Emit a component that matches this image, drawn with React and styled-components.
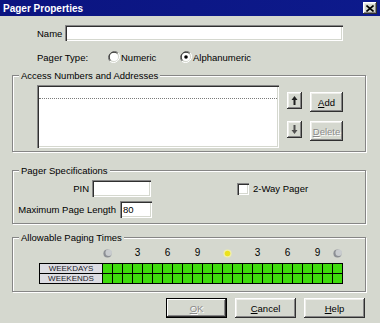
import React from "react";
import styled, { createGlobalStyle } from "styled-components";

const FACE = "#d5d8cf";

const GlobalStyle = createGlobalStyle`
  html, body {
    margin: 0;
    padding: 0;
    background: ${FACE};
  }
  body {
    font-family: "Liberation Sans", Arial, sans-serif;
    font-size: 9.5px;
    color: #000;
  }
`;

const HOURS = Array.from({ length: 24 }, (_, i) => i);

const MARKS = [
  { col: 1, kind: "moon" },
  { col: 4, text: "3" },
  { col: 7, text: "6" },
  { col: 10, text: "9" },
  { col: 13, kind: "sun" },
  { col: 16, text: "3" },
  { col: 19, text: "6" },
  { col: 22, text: "9" },
  { col: 24, kind: "moon" },
];

function Radio({ checked }) {
  return (
    <svg width="12" height="12" viewBox="0 0 12 12">
      <path d="M10.2 1.8 A6 6 0 0 0 1.8 10.2" stroke="#808080" strokeWidth="1" fill="none" />
      <path d="M9.4 2.6 A4.8 4.8 0 0 0 2.6 9.4" stroke="#303030" strokeWidth="1" fill="none" />
      <path d="M1.8 10.2 A6 6 0 0 0 10.2 1.8" stroke="#fff" strokeWidth="1" fill="none" />
      <circle cx="6" cy="6" r="4" fill="#fff" />
      {checked && <circle cx="6" cy="6" r="1.8" fill="#000" />}
    </svg>
  );
}

function Moon() {
  return (
    <svg width="11" height="11" viewBox="0 0 11 11">
      <circle cx="5.5" cy="5.5" r="5" fill="#8c8f94" />
      <circle cx="7" cy="4.5" r="4" fill="#c9cccf" />
    </svg>
  );
}

function Sun() {
  return (
    <svg width="11" height="11" viewBox="0 0 11 11">
      <circle cx="5.5" cy="5.5" r="5" fill="#f1f0a8" />
      <circle cx="5.5" cy="5.5" r="3.4" fill="#ece21c" />
    </svg>
  );
}

function Arrow({ down }) {
  return (
    <svg width="7" height="11" viewBox="0 0 7 11" style={{ transform: down ? "rotate(180deg)" : "none" }}>
      <path d="M3.5 1 L0.5 5 H2.5 V10 H4.5 V5 H6.5 Z" fill={down ? "#505050" : "#202020"} />
    </svg>
  );
}

export default function App() {
  return (
    <>
      <GlobalStyle />
      <Window>
        <TitleBar>
          <Title>Pager Properties</Title>
          <CloseButton>
            <svg width="8" height="7" viewBox="0 0 8 7">
              <path d="M0.5 0.5 L7.5 6.5 M7.5 0.5 L0.5 6.5" stroke="#000" strokeWidth="1.6" />
            </svg>
          </CloseButton>
        </TitleBar>

        <FieldRow $top={9}>
          <RowLabel $w={28}>Name</RowLabel>
          <TextField $w={278} $h={16} />
        </FieldRow>

        <FieldRow $top={8}>
          <RowLabel $w={71}>Pager Type:</RowLabel>
          <Option $w={72}>
            <Radio />
            <span>Numeric</span>
          </Option>
          <Option>
            <Radio checked />
            <span>Alphanumeric</span>
          </Option>
        </FieldRow>

        <GroupBox $top={10}>
          <Legend>Access Numbers and Addresses</Legend>
          <AccessBody>
            <ListBox>
              <ListRow />
            </ListBox>
            <ListButtons>
              <ButtonLine>
                <ArrowButton>
                  <Arrow />
                </ArrowButton>
                <PushButton $w={33} $h={20}>
                  <u>A</u>dd
                </PushButton>
              </ButtonLine>
              <ButtonLine>
                <ArrowButton>
                  <Arrow down />
                </ArrowButton>
                <PushButton $w={33} $h={20} $disabled>
                  <u>D</u>elete
                </PushButton>
              </ButtonLine>
            </ListButtons>
          </AccessBody>
        </GroupBox>

        <GroupBox $top={18}>
          <Legend>Pager Specifications</Legend>
          <SpecBody>
            <SpecRow>
              <SpecLabel $w={76}>PIN</SpecLabel>
              <TextField $w={59} $h={17} $gap={3} />
              <CheckItem>
                <CheckBox />
                <span>2-Way Pager</span>
              </CheckItem>
            </SpecRow>
            <SpecRow>
              <SpecLabel $w={103}>Maximum Page Length</SpecLabel>
              <TextField $w={32} $h={17} $gap={4}>
                80
              </TextField>
            </SpecRow>
          </SpecBody>
        </GroupBox>

        <GroupBox $top={13}>
          <Legend>Allowable Paging Times</Legend>
          <TimesBody>
            <MarkRow>
              {MARKS.map((m, i) => (
                <Mark key={i} $col={m.col + 1}>
                  {m.kind === "moon" ? <Moon /> : m.kind === "sun" ? <Sun /> : m.text}
                </Mark>
              ))}
            </MarkRow>
            <TimeGrid>
              <DayLabel>WEEKDAYS</DayLabel>
              {HOURS.map((h) => (
                <Slot key={"d" + h} />
              ))}
              <DayLabel>WEEKENDS</DayLabel>
              {HOURS.map((h) => (
                <Slot key={"e" + h} />
              ))}
            </TimeGrid>
          </TimesBody>
        </GroupBox>

        <DialogButtons>
          <PushButton $w={61} $h={20} $disabled $default>
            <u>O</u>K
          </PushButton>
          <PushButton $w={61} $h={20}>
            <u>C</u>ancel
          </PushButton>
          <PushButton $w={61} $h={20}>
            <u>H</u>elp
          </PushButton>
        </DialogButtons>
      </Window>
    </>
  );
}

// ----------------- Styles section ---------------------

const raised = `
  background: ${FACE};
  box-shadow: inset -1px -1px #303030, inset 1px 1px #ffffff,
    inset -2px -2px #868686, inset 2px 2px #eeeeea;
`;

const sunken = `
  background: #ffffff;
  box-shadow: inset 1px 1px #868686, inset 2px 2px #303030,
    inset -1px -1px #ffffff, inset -2px -2px ${FACE};
`;

const Window = styled.div`
  width: 380px;
  height: 323px;
  display: flex;
  flex-direction: column;
  background: ${FACE};
  overflow: hidden;
`;

const TitleBar = styled.div`
  height: 16px;
  flex: none;
  display: flex;
  align-items: center;
  justify-content: space-between;
  padding: 0 3px 0 3px;
  background: linear-gradient(90deg, #0b1480 0%, #0d1a8c 100%);
`;

const Title = styled.span`
  color: #fff;
  font-weight: bold;
  font-size: 10px;
`;

const CloseButton = styled.div`
  ${raised};
  width: 14px;
  height: 12px;
  display: flex;
  align-items: center;
  justify-content: center;
`;

const FieldRow = styled.div`
  display: flex;
  align-items: center;
  height: 16px;
  margin: ${(p) => p.$top}px 0 0 37px;
`;

const RowLabel = styled.span`
  width: ${(p) => p.$w}px;
  flex: none;
`;

const Option = styled.label`
  display: flex;
  align-items: center;
  width: ${(p) => (p.$w ? `${p.$w}px` : "auto")};

  & > span {
    margin-left: 1px;
  }
`;

const TextField = styled.div`
  ${sunken};
  width: ${(p) => p.$w}px;
  height: ${(p) => p.$h}px;
  margin-left: ${(p) => p.$gap || 0}px;
  flex: none;
  box-sizing: border-box;
  padding: 2px 0 0 3px;
  line-height: 13px;
`;

const GroupBox = styled.div`
  margin: ${(p) => p.$top}px 0 0 12px;
  width: 354px;
  box-sizing: border-box;
  border: 1px solid #868686;
  box-shadow: inset 1px 1px #ffffff, 1px 1px #ffffff;
  display: flex;
  flex-direction: column;
`;

const Legend = styled.span`
  align-self: flex-start;
  margin: -7px 0 0 6px;
  padding: 0 2px;
  height: 13px;
  line-height: 13px;
  background: ${FACE};
`;

const AccessBody = styled.div`
  display: flex;
  padding: 3px 0 3px 24px;
`;

const ListBox = styled.div`
  ${sunken};
  width: 242px;
  height: 63px;
  box-sizing: border-box;
  padding: 2px;
`;

const ListRow = styled.div`
  height: 11px;
  border-bottom: 1px dotted #7a7a7a;
`;

const ListButtons = styled.div`
  display: flex;
  flex-direction: column;
  gap: 9px;
  margin: 7px 0 0 8px;
`;

const ButtonLine = styled.div`
  display: flex;
  align-items: flex-start;
  gap: 8px;
`;

const ArrowButton = styled.div`
  ${raised};
  width: 15px;
  height: 17px;
  display: flex;
  align-items: center;
  justify-content: center;
`;

const PushButton = styled.div`
  ${raised};
  width: ${(p) => p.$w}px;
  height: ${(p) => p.$h}px;
  box-sizing: border-box;
  display: flex;
  align-items: center;
  justify-content: center;
  color: ${(p) => (p.$disabled ? "#8a8a8a" : "#000")};
  text-shadow: ${(p) => (p.$disabled ? "1px 1px #fff" : "none")};
  ${(p) =>
    p.$default &&
    `box-shadow: inset 0 0 0 1px #000, inset -2px -2px #303030, inset 2px 2px #ffffff,
      inset -3px -3px #868686;`}

  u {
    text-decoration-thickness: 1px;
  }
`;

const SpecBody = styled.div`
  display: flex;
  flex-direction: column;
  gap: 4px;
  padding: 3px 0 5px 0;
`;

const SpecRow = styled.div`
  display: flex;
  align-items: center;
`;

const SpecLabel = styled.span`
  width: ${(p) => p.$w}px;
  flex: none;
  text-align: right;
`;

const CheckItem = styled.label`
  display: flex;
  align-items: center;
  gap: 4px;
  margin-left: 86px;
`;

const CheckBox = styled.span`
  ${sunken};
  width: 12px;
  height: 12px;
  display: block;
`;

const TimesBody = styled.div`
  display: flex;
  flex-direction: column;
  padding: 3px 0 7px 26px;
`;

const gridColumns = `
  display: grid;
  grid-template-columns: 62px repeat(24, 9px);
  column-gap: 1px;
`;

const MarkRow = styled.div`
  ${gridColumns};
  height: 12px;
  padding: 0 1px;
`;

const Mark = styled.span`
  grid-column: ${(p) => p.$col};
  display: flex;
  align-items: center;
  justify-content: center;
  line-height: 12px;
  font-size: 10px;
`;

const TimeGrid = styled.div`
  ${gridColumns};
  grid-auto-rows: 9px;
  row-gap: 1px;
  padding: 1px;
  margin-top: 4px;
  width: fit-content;
  background: #000;
`;

const DayLabel = styled.span`
  background: #dcdce2;
  color: #1c1c2a;
  font-size: 8px;
  line-height: 9px;
  text-align: center;
`;

const Slot = styled.span`
  background: #3fdc0c;
`;

const DialogButtons = styled.div`
  display: flex;
  justify-content: flex-end;
  gap: 8px;
  margin-top: 6px;
  padding-right: 15px;
`;
